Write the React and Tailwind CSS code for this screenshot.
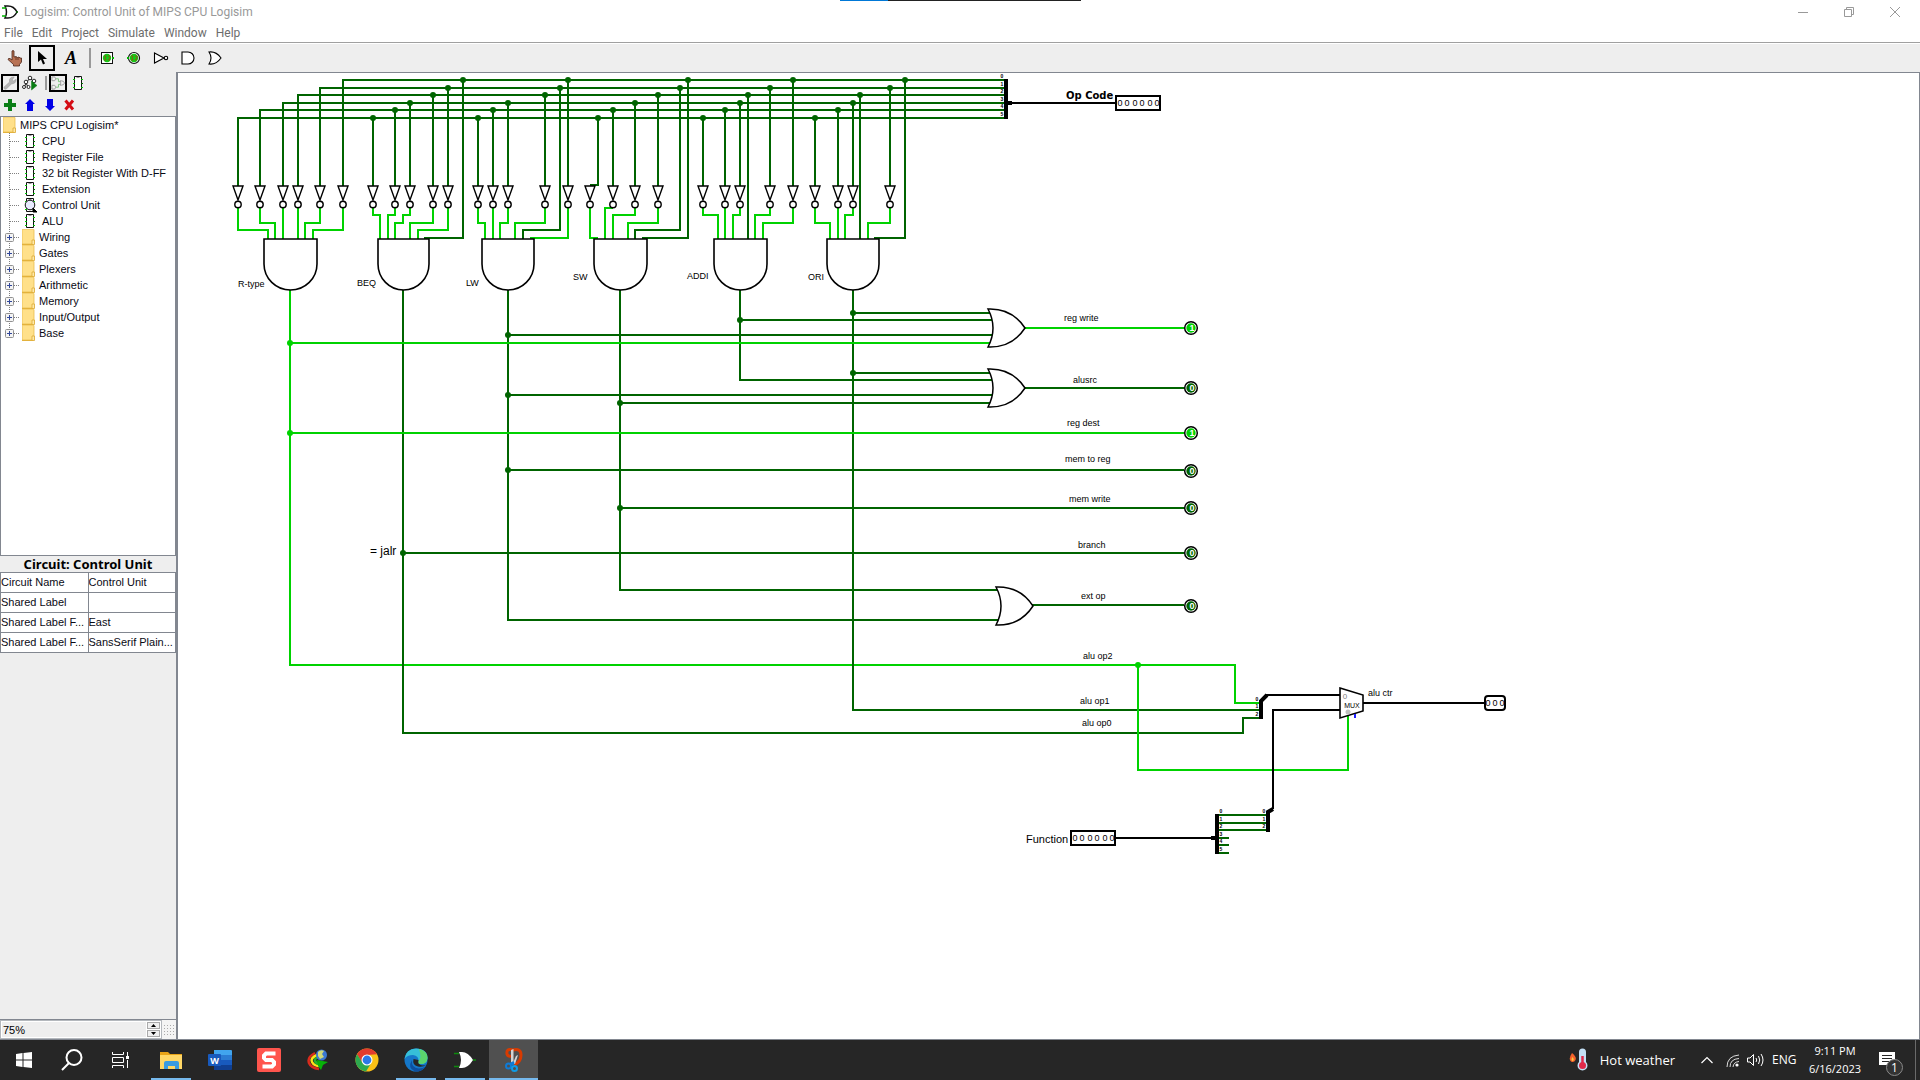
import React from "react";

const DARK = "#006400";
const LIT = "#00d200";

/* ---------- circuit data ---------- */

const busY = [118, 110, 103, 95, 88, 80];

const groups = [
  {
    name: "R-type", labelX: 238, labelY: 287, left: 264, right: 317, cx: 290,
    taps: [238, 260, 283, 298, 320, 343], first: true,
    inverters: [238, 260, 283, 298, 320, 343],
    dark: [],
    lit: ["M238 208V230H268V240", "M260 208V223H275V240", "M283 208V240", "M298 208V240", "M320 208V223H305V240", "M343 208V230H313V240"],
  },
  {
    name: "BEQ", labelX: 357, labelY: 286, left: 378, right: 429, cx: 403,
    taps: [373, 395, 410, 433, 448, 463],
    inverters: [373, 395, 410, 433, 448],
    dark: ["M463 80V238H424"],
    lit: ["M373 208V215H380V240", "M395 208V215H388V240", "M410 208V215H403V223H395V240", "M433 208V223H410V240", "M448 208V230H418V240"],
  },
  {
    name: "LW", labelX: 466, labelY: 286, left: 482, right: 534, cx: 508,
    taps: [478, 493, 508, 545, 560, 568],
    inverters: [478, 493, 508, 545, 568],
    dark: ["M560 88V230H523V240"],
    lit: ["M478 208V223H485V240", "M493 208V240", "M508 208V223H500V240", "M545 208V223H515V240", "M568 208V238H530"],
  },
  {
    name: "SW", labelX: 573, labelY: 280, left: 594, right: 647, cx: 620,
    taps: [598, 613, 635, 658, 680, 688],
    inverters: [590, 613, 635, 658],
    dark: ["M598 118V185H590", "M680 88V230H635V240", "M688 80V238H642"],
    lit: ["M590 208V238H598", "M613 208H605V240", "M635 208V215H613V240", "M658 208V223H628V240"],
  },
  {
    name: "ADDI", labelX: 687, labelY: 279, left: 714, right: 767, cx: 740,
    taps: [703, 725, 740, 748, 770, 793],
    inverters: [703, 725, 740, 770, 793],
    dark: ["M748 95V240"],
    lit: ["M703 208V215H718V240", "M725 208V240", "M740 208V215H733V240", "M770 208V215H755V240", "M793 208V223H763V240"],
  },
  {
    name: "ORI", labelX: 808, labelY: 280, left: 827, right: 879, cx: 853,
    taps: [815, 838, 853, 860, 890, 905],
    inverters: [815, 838, 853, 890],
    dark: ["M860 95V240", "M905 80V238H874"],
    lit: ["M815 208V223H830V240", "M838 208V240", "M853 208V215H845V240", "M890 208V223H868V240"],
  },
];

const darkWires = [
  "M403 290V733H1243V718H1260",
  "M508 290V620H998",
  "M620 290V590H998",
  "M740 290V380H992",
  "M853 290V710H1260",
  "M853 313H990", "M740 320H992", "M508 335H992",
  "M853 373H990", "M508 395H992", "M620 403H990",
  "M1025 388H1184",
  "M508 470H1184", "M620 508H1184", "M403 553H1184",
  "M1032 605H1184",
  "M1219 815H1266", "M1219 823H1266", "M1219 830H1266",
  "M1219 838H1229", "M1219 845H1229", "M1219 853H1229",
];

const litWires = [
  "M290 290V665H1235V703H1260",
  "M290 343H990", "M1025 328H1184", "M290 433H1184",
  "M1138 665V770H1348V714",
];

const darkDots = [
  [740, 320], [508, 335], [853, 313], [853, 373], [508, 395], [620, 403],
  [508, 470], [620, 508], [403, 553],
];
const litDots = [[290, 343], [290, 433], [1138, 665]];

const labels = [
  ["reg write", 1064, 321], ["alusrc", 1073, 383], ["reg dest", 1067, 426],
  ["mem to reg", 1065, 462], ["mem write", 1069, 502], ["branch", 1078, 548],
  ["ext op", 1081, 599], ["alu op2", 1083, 659], ["alu op1", 1080, 704],
  ["alu op0", 1082, 726], ["alu ctr", 1368, 696],
];

const outputs = [
  [328, 1], [388, 0], [433, 1], [471, 0], [508, 0], [553, 0], [606, 0],
];

function Inverter({ x }) {
  return (
    <g fill="#fff" stroke="#000" strokeWidth="1.4">
      <path d={`M${x - 5} 186H${x + 5}L${x} 200Z`} />
      <circle cx={x} cy="204.5" r="3.2" />
    </g>
  );
}

function AndGate({ left, right }) {
  const r = (right - left) / 2;
  return (
    <path
      d={`M${left} 239H${right}V264A${r} 26 0 0 1 ${left} 264Z`}
      fill="#fff" stroke="#000" strokeWidth="1.6"
    />
  );
}

function OrGate({ x, y }) {
  return (
    <path
      d={`M${x} ${y - 19}Q${x + 10} ${y} ${x} ${y + 19}Q${x + 24} ${y + 20} ${x + 37} ${y}Q${x + 24} ${y - 20} ${x} ${y - 19}Z`}
      fill="#fff" stroke="#000" strokeWidth="1.5"
    />
  );
}

function Dot({ x, y, color }) {
  return <circle cx={x} cy={y} r="3" fill={color} />;
}

function Bits({ xs, y }) {
  return xs.map((x) => (
    <text key={x} x={x} y={y} fontSize="9" textAnchor="middle">0</text>
  ));
}

function Ticks({ x, ys }) {
  return ys.map((y, i) => (
    <text key={y} x={x} y={y} fontSize="5" fontWeight="bold" textAnchor="middle">{i}</text>
  ));
}

function Circuit() {
  return (
    <svg width="1400" height="860" viewBox="178 73 1400 860" className="block shrink-0" fontFamily="'Liberation Sans', Arial, sans-serif" role="img" aria-label="Control Unit circuit">
      <g fill="none" stroke={DARK} strokeWidth="2">
        {busY.map((y, i) => (
          <path key={y} d={`M${groups[0].taps[i]} 186V${y}H1004`} />
        ))}
        {groups.slice(1).map((g) =>
          g.taps.map((x, i) =>
            g.inverters.includes(x) ? <path key={x} d={`M${x} ${busY[i]}V186`} /> : null
          )
        )}
        {groups.map((g) => g.dark.map((d) => <path key={d} d={d} />))}
      </g>
      <g fill="none" stroke={LIT} strokeWidth="2">
        {groups.map((g) => g.lit.map((d) => <path key={d} d={d} />))}
        {litWires.map((d) => <path key={d} d={d} />)}
      </g>
      <g fill="none" stroke={DARK} strokeWidth="2">
        {darkWires.map((d) => <path key={d} d={d} />)}
      </g>
      <path d="M1138 665V770M290 343H990M290 433H1184" fill="none" stroke={LIT} strokeWidth="2" />
      {groups.slice(1).map((g) => g.taps.map((x, i) => <Dot key={x} x={x} y={busY[i]} color={DARK} />))}
      {darkDots.map(([x, y]) => <Dot key={`${x}-${y}`} x={x} y={y} color={DARK} />)}
      {litDots.map(([x, y]) => <Dot key={`${x}-${y}`} x={x} y={y} color={LIT} />)}

      {groups.map((g) => (
        <g key={g.name}>
          {g.inverters.map((x) => <Inverter key={x} x={x} />)}
          <AndGate left={g.left} right={g.right} />
          <text x={g.labelX} y={g.labelY} fontSize="9">{g.name}</text>
        </g>
      ))}
      <OrGate x={988} y={328} />
      <OrGate x={988} y={388} />
      <OrGate x={996} y={606} />

      <g fill="none" stroke="#000" strokeWidth="2">
        <path d="M1008 103H1116M1115 838H1216M1266 695H1340M1340 710H1273V809M1363 703H1484" />
        <path d="M1006 79V119M1217 814V854" strokeWidth="4" />
        <path d="M1008 103H1012M1211 838H1216" strokeWidth="4" />
        <path d="M1261 719V701L1267 695M1268 832V812L1273 809" strokeWidth="4" />
        <rect x="1116" y="96" width="44" height="14" fill="#fff" />
        <rect x="1071" y="831" width="44" height="14" fill="#fff" />
        <rect x="1485" y="696" width="20" height="14" rx="3" fill="#fff" />
        <path d="M1340 688L1363 695V711L1340 718Z" fill="#fff" strokeWidth="1.6" />
      </g>
      <circle cx="1348" cy="712" r="2.5" fill="#bfbfbf" />
      <path d="M1355 714V718" stroke="#2020ff" strokeWidth="2" />
      <text x="1345" y="699" fontSize="8" fill="#808080" textAnchor="middle">0</text>
      <text x="1352" y="708" fontSize="7" textAnchor="middle">MUX</text>

      <Bits xs={[1120, 1127, 1135, 1142, 1150, 1157]} y={106} />
      <Bits xs={[1075, 1082, 1090, 1097, 1105, 1112]} y={841} />
      <Bits xs={[1488, 1495, 1502]} y={706} />
      <Ticks x={1002} ys={[78, 86, 93, 101, 108, 116]} />
      <Ticks x={1221} ys={[813, 821, 828, 836, 843, 851]} />
      <Ticks x={1257} ys={[701, 708, 716]} />
      <Ticks x={1264} ys={[813, 821, 828]} />

      {outputs.map(([y, v]) => (
        <g key={y}>
          <circle cx="1191" cy={y} r="6.3" fill="#fff" stroke="#000" strokeWidth="1.5" />
          <circle cx="1191" cy={y} r="4.7" fill={v ? LIT : DARK} />
          <text x="1192" y={y + 3} fontSize="9" fontWeight="bold" fill="#fff" textAnchor="middle">{v}</text>
        </g>
      ))}
      {labels.map(([t, x, y]) => <text key={t} x={x} y={y} fontSize="9">{t}</text>)}
      <text x="1026" y="843" fontSize="11">Function</text>
      <text x="370" y="555" fontSize="12">= jalr</text>
      <text x="1066" y="99" fontSize="10" fontWeight="bold" fontFamily="'DejaVu Sans', Verdana, sans-serif">Op Code</text>
    </svg>
  );
}

/* ---------- small icons ---------- */

function LogoIcon() {
  return (
    <svg width="16" height="16" viewBox="0 0 16 16" fill="none">
      <path d="M3 2H6Q12 2 15 8Q12 14 6 14H3Q6 8 3 2Z" fill="#fff" stroke="#111" strokeWidth="1.5" />
      <path d="M0 4H4M0 12H4" stroke="#00b400" strokeWidth="1.6" />
      <path d="M14 8H16" stroke="#006400" strokeWidth="1.6" />
    </svg>
  );
}

function HandIcon() {
  return (
    <svg width="16" height="17" viewBox="0 0 16 17">
      <path d="M5 1Q6 0 7 1V7L9 6.500L10.500 7.500L12 7L13 8L14.500 8V12L12.500 14.500V16H6.500V14.500L1 9.500Q1 8 3 8.500L5 10Z" fill="#b87254" stroke="#4a2316" strokeWidth="0.800" />
      <path d="M9 7V10M11 7.500V10" stroke="#4a2316" strokeWidth="0.700" />
    </svg>
  );
}

function ChipIcon({ active }) {
  return (
    <svg width="14" height="16" viewBox="0 0 14 16" className="shrink-0">
      <path d="M3.500 1.500H10.500V14.500H3.500Z" fill="#fff" stroke="#111" />
      <path d="M5.500 2.500H8.500" fill="none" stroke="#999" />
      <path d="M2 4.500H4M2 8.500H4M2 12.500H4M10 4.500H12M10 12.500H12" stroke="#00c800" />
      <path d="M10 8.500H12" stroke="#006400" />
      {active && (
        <>
          <circle cx="7" cy="8" r="4.800" fill="#e8eaff" stroke="#111" />
          <path d="M10 11L14 15H10Z" fill="#000" stroke="#000" />
        </>
      )}
    </svg>
  );
}

function FolderIcon() {
  return (
    <svg width="13" height="16" viewBox="0 0 13 16" className="shrink-0">
      <path d="M0 1Q0 0 1 0H11Q12 0 12 1V15H0Z" fill="#ffe08a" stroke="#e9bd4e" strokeWidth="0.800" />
      <path d="M10 11H12.500V15.500H10Z" fill="#ffe9a8" stroke="#dca935" strokeWidth="0.800" />
      <path d="M0 15.500H11" stroke="#e3b23c" />
    </svg>
  );
}

function Branch({ expandable, last }) {
  return (
    <svg width="16" height="16" viewBox="0 0 16 16" className="shrink-0">
      <path d={last ? "M5.500 0V8" : "M5.500 0V16"} stroke="#808080" strokeDasharray="1 1" />
      <path d="M6 8.500H16" stroke="#808080" strokeDasharray="1 1" />
      {expandable && (
        <>
          <rect x="1.500" y="4.500" width="8" height="8" rx="1" fill="#f4f4f4" stroke="#919191" />
          <path d="M3 8.500H8M5.500 6V11" stroke="#31479a" />
        </>
      )}
    </svg>
  );
}

function GateTool({ kind }) {
  return (
    <svg width="16" height="16" viewBox="0 0 16 16" fill="#fff" stroke="#000" strokeWidth="1.100">
      {kind === "not" && (
        <>
          <path d="M1.500 3L11 8L1.500 13Z" />
          <circle cx="13" cy="8" r="1.700" />
        </>
      )}
      {kind === "and" && <path d="M2 2H8A6 6 0 0 1 8 14H2Z" />}
      {kind === "or" && <path d="M2 2Q9 1 14 8Q9 15 2 14Q6 8 2 2Z" />}
    </svg>
  );
}

function PinTool({ round }) {
  return (
    <svg width="16" height="16" viewBox="0 0 16 16">
      {round ? (
        <circle cx="8" cy="8" r="5.500" fill="#fff" stroke="#111" strokeWidth="1.200" />
      ) : (
        <rect x="2.500" y="2.500" width="11" height="11" fill="#fff" stroke="#111" />
      )}
      <circle cx="8" cy="8" r="4.200" fill="#14c814" />
      <path d="M5 6H7L6 8L7 10H5M9 6H11V8L9 10H11" fill="none" stroke="#8a5a10" strokeWidth="0.900" />
      <path d={round ? "M1 8H3" : "M13 8H15"} stroke="#00b400" strokeWidth="2" />
    </svg>
  );
}

function WrenchIcon() {
  return (
    <svg width="14" height="14" viewBox="0 0 15 15">
      <path d="M1 12L7 6.500Q6 3 9 1.500L12 1L10 4L11 5.500L14 3.500Q14.500 8 9 8.500L3.500 14Q1 15 1 12Z" fill="#b4b4b4" stroke="#9a9a9a" strokeWidth="0.600" />
    </svg>
  );
}

function SimTreeIcon() {
  return (
    <svg width="16" height="16" viewBox="0 0 16 16" fill="#fff" stroke="#111" strokeWidth="0.900">
      <path d="M8 3L4 8L2 13M4 8L6 12M8 3L12 7" fill="none" />
      <circle cx="8" cy="3" r="1.800" />
      <circle cx="4" cy="7" r="1.800" />
      <circle cx="2" cy="12" r="1.500" />
      <circle cx="6.500" cy="12" r="1.500" />
      <circle cx="12" cy="6" r="1.800" />
      <path d="M9.500 6V15L15 10.500Z" fill="#0a7d14" stroke="#0a7d14" strokeWidth="0.500" />
    </svg>
  );
}

function LayoutIcon() {
  return (
    <svg width="14" height="14" viewBox="0 0 15 15" fill="#f2f2f2" stroke="#9a9a9a">
      <path d="M5 3H8V6H10M5 12H8V9H10" fill="none" stroke="#7ac47a" />
      <path d="M1 1H4Q6 3 4 5H1ZM1 10H4Q6 12 4 14H1ZM10 5Q14 5 14.500 7.500Q14 10 10 10Q11 7.500 10 5Z" />
    </svg>
  );
}

/* ---------- window parts ---------- */

const circuits = ["CPU", "Register File", "32 bit Register With D-FF", "Extension", "Control Unit", "ALU"];
const libraries = ["Wiring", "Gates", "Plexers", "Arithmetic", "Memory", "Input/Output", "Base"];
const attributes = [
  ["Circuit Name", "Control Unit"],
  ["Shared Label", ""],
  ["Shared Label F...", "East"],
  ["Shared Label F...", "SansSerif Plain..."],
];

function TitleBar() {
  return (
    <header className="flex h-6 shrink-0 items-center bg-white text-[#999]">
      <div className="flex flex-1 items-center gap-[6px] pl-[2px]">
        <LogoIcon />
        <h1 className="text-xs leading-6">Logisim: Control Unit of MIPS CPU Logisim</h1>
      </div>
      <div className="flex h-5 items-center pr-[2px]">
        <button aria-label="Minimize" className="flex w-[46px] justify-center">
          <svg width="10" height="10" stroke="#999"><path d="M0 5.500H10" /></svg>
        </button>
        <button aria-label="Restore" className="flex w-[46px] justify-center">
          <svg width="10" height="10" fill="none" stroke="#999"><path d="M0.500 2.500H7.500V9.500H0.500ZM2.500 2V0.500H9.500V7.500H8" /></svg>
        </button>
        <button aria-label="Close" className="flex w-[46px] justify-center">
          <svg width="10" height="10" stroke="#999"><path d="M0 0L10 10M10 0L0 10" /></svg>
        </button>
      </div>
    </header>
  );
}

function MenuBar() {
  return (
    <nav className="flex h-[19px] shrink-0 items-center gap-[9px] border-b border-[#a0a0a0] bg-white pl-1 text-xs leading-4 text-[#6d6d6d]">
      {["File", "Edit", "Project", "Simulate", "Window", "Help"].map((m) => (
        <button key={m}>{m}</button>
      ))}
    </nav>
  );
}

function Toolbar() {
  return (
    <div className="flex h-[29px] shrink-0 items-center border-t border-white bg-[#eee] pl-[7px]">
      <button aria-label="Poke tool" className="flex w-[22px]"><HandIcon /></button>
      <button aria-label="Edit tool" className="flex size-[26px] items-center justify-center border-2 border-black">
        <svg width="12" height="16" viewBox="0 0 12 16"><path d="M2 1V12L5 9.500L7 14.500L9 13.500L7 9H11Z" fill="#000" /></svg>
      </button>
      <button aria-label="Text tool" className="flex w-8 justify-center font-['Liberation_Serif',serif] text-lg leading-6 font-bold italic">A</button>
      <span className="ml-[2px] h-5 w-[2px] bg-[#999]" />
      <div className="ml-2 flex gap-[11px]">
        <button aria-label="Input pin"><PinTool /></button>
        <button aria-label="Output pin"><PinTool round /></button>
        <button aria-label="NOT gate"><GateTool kind="not" /></button>
        <button aria-label="AND gate"><GateTool kind="and" /></button>
        <button aria-label="OR gate"><GateTool kind="or" /></button>
      </div>
    </div>
  );
}

function SideTools() {
  return (
    <div className="h-[44px] shrink-0">
      <div className="flex h-[22px] items-center pl-px">
        <button aria-label="Toolbox" className="flex size-[18px] shrink-0 items-center justify-center border-2 border-black"><WrenchIcon /></button>
        <button aria-label="Simulation tree" className="ml-[3px]"><SimTreeIcon /></button>
        <span className="ml-[7px] h-[14px] w-[2px] bg-[#999]" />
        <button aria-label="Edit layout" className="ml-[2px] flex size-[18px] shrink-0 items-center justify-center border-2 border-black"><LayoutIcon /></button>
        <button aria-label="Edit appearance" className="ml-1"><ChipIcon /></button>
      </div>
      <div className="flex h-[22px] items-center gap-2 pl-1">
        <button aria-label="Add circuit"><svg width="12" height="12"><path d="M4 0H8V4H12V8H8V12H4V8H0V4H4Z" fill="#0b7f17" /></svg></button>
        <button aria-label="Move up"><svg width="12" height="12"><path d="M6 0L11 5H9V12H3V5H1Z" fill="#0000e6" /></svg></button>
        <button aria-label="Move down"><svg width="12" height="12"><path d="M6 12L11 7H9V0H3V7H1Z" fill="#0000e6" /></svg></button>
        <button aria-label="Delete"><svg width="11" height="12"><path d="M1.500 1.500L9 10.500M9 1.500L1.500 10.500" stroke="#d40c14" strokeWidth="3" /></svg></button>
      </div>
    </div>
  );
}

function Explorer() {
  return (
    <ul className="h-[440px] shrink-0 overflow-hidden border border-[#828790] bg-white text-[11px] leading-4 text-[#0a0a14]">
      <li className="flex h-4 items-center">
        <button className="ml-[2px] flex items-center gap-1"><FolderIcon />MIPS CPU Logisim*</button>
      </li>
      {circuits.map((c) => (
        <li key={c} className="flex h-4 items-center pl-[3px]">
          <Branch />
          <button className="ml-[3px] flex items-center gap-[5px] whitespace-nowrap"><ChipIcon active={c === "Control Unit"} />{c}</button>
        </li>
      ))}
      {libraries.map((l, i) => (
        <li key={l} className="flex h-4 items-center pl-[3px]">
          <Branch expandable last={i === libraries.length - 1} />
          <button className="ml-[2px] flex items-center gap-1"><FolderIcon />{l}</button>
        </li>
      ))}
    </ul>
  );
}

function Attributes() {
  return (
    <section className="text-[11px] leading-4 text-[#0a0a14]">
      <h2 className="h-4 text-center font-['Noto_Sans',sans-serif] text-[13px] leading-4 font-bold whitespace-nowrap text-black">Circuit: Control Unit</h2>
      <table className="w-full table-fixed border-collapse bg-white">
        <tbody>
          {attributes.map(([k, v], i) => (
            <tr key={i} className="h-5">
              <th scope="row" className="overflow-hidden border border-[#828790] p-0 pb-[2px] text-left font-normal whitespace-nowrap">{k}</th>
              <td className="overflow-hidden border border-[#828790] p-0 pb-[2px] whitespace-nowrap">{v}</td>
            </tr>
          ))}
        </tbody>
      </table>
    </section>
  );
}

function ZoomBar() {
  return (
    <div className="mt-auto flex h-[21px] shrink-0 border-y border-[#828790]">
      <div className="flex flex-1 border border-[#b4b8bd] bg-white p-px">
        <input aria-label="Zoom" defaultValue="75%" className="w-0 flex-1 bg-[#eee] pl-px text-[11px] leading-4 outline-none" />
        <div className="ml-px flex w-[13px] flex-col gap-px">
          <button aria-label="Zoom in" className="flex flex-1 items-center justify-center border border-[#aaa] bg-[#f0f0f0]"><svg width="5" height="3"><path d="M0 3L2.500 0L5 3Z" /></svg></button>
          <button aria-label="Zoom out" className="flex flex-1 items-center justify-center border border-[#aaa] bg-[#f0f0f0]"><svg width="5" height="3"><path d="M0 0L2.500 3L5 0Z" /></svg></button>
        </div>
      </div>
      <button aria-label="Toggle grid" className="flex w-[14px] items-center justify-center bg-[#f4f4f4]">
        <svg width="10" height="12" stroke="#aaa" strokeDasharray="1 2"><path d="M0 1.500H10M0 4.500H10M0 7.500H10M0 10.500H10" /></svg>
      </button>
    </div>
  );
}

/* ---------- taskbar ---------- */

const TaskIcons = {
  explorer: (
    <svg width="22" height="19" viewBox="0 0 22 19">
      <path d="M0 1H8L10 3H22V17H0Z" fill="#e8a317" />
      <path d="M0 4H22V18H0Z" fill="#ffd766" />
      <path d="M4 18V12Q4 10 6 10H17Q19 10 19 12V18H15V15H8V18Z" fill="#3a9be0" />
    </svg>
  ),
  word: (
    <svg width="24" height="22" viewBox="0 0 24 22">
      <path d="M6 1H23Q24 1 24 2V6H6Z" fill="#41a5ee" />
      <path d="M6 6H24V11H6Z" fill="#2b7cd3" />
      <path d="M6 11H24V16H6Z" fill="#185abd" />
      <path d="M6 16H24V20Q24 21 23 21H6Z" fill="#103f91" />
      <rect x="0" y="5" width="13" height="12" rx="1" fill="#185abd" />
      <text x="6.500" y="14.500" fontSize="9" fontWeight="bold" fill="#fff" textAnchor="middle">W</text>
    </svg>
  ),
  snagit: (
    <svg width="24" height="24" viewBox="0 0 24 24">
      <rect x="0" y="0" width="24" height="24" rx="2" fill="#ff554d" />
      <path d="M18.500 5.500H9L7 7.500V10L9 12H15L17 14V16.500L15 18.500H5.500" fill="none" stroke="#fff" strokeWidth="4" />
    </svg>
  ),
  idm: (
    <svg width="24" height="22" viewBox="0 0 22 22">
      <path d="M8 4Q0 8 2 14Q4 19 12 20" fill="none" stroke="#d92b1c" strokeWidth="2.500" />
      <path d="M10 6Q3 9 5 13Q7 17 13 17" fill="none" stroke="#ffe11a" strokeWidth="2.500" />
      <path d="M11 8Q7 10 8 12Q9 15 13 15" fill="none" stroke="#25b02c" strokeWidth="2.500" />
      <circle cx="14.500" cy="6" r="5.500" fill="#3c78d2" />
      <path d="M11 3Q14 0 17 2L15 5L17 8L13 10L11 7Z" fill="#cfd97a" />
      <path d="M10 11L21 13L16 16L14 21L11 17Z" fill="#08b208" />
    </svg>
  ),
  chrome: (
    <svg width="24" height="24" viewBox="0 0 24 24">
      <circle cx="12" cy="12" r="11.500" fill="#fbc116" />
      <path d="M2 6.300A11.500 11.500 0 0 1 22 6.300L12 7L7 14.700Z" fill="#e33b2e" />
      <path d="M2 6.300A11.500 11.500 0 0 0 11 23.500L16.500 14.500L12 17Q9 17 7.500 14.800Z" fill="#2da94f" />
      <circle cx="12" cy="12" r="5.500" fill="#fff" />
      <circle cx="12" cy="12" r="4.400" fill="#2c78e8" />
    </svg>
  ),
  edge: (
    <svg width="24" height="24" viewBox="0 0 24 24">
      <circle cx="12" cy="12" r="11.500" fill="#1577c9" />
      <path d="M0.500 11Q2 0.500 12 0.500Q23.500 1 23.500 10Q23 16 17 16Q13 16 14.500 13Q15 8 9 7Q3 7 0.500 11Z" fill="#36bfd8" />
      <path d="M15 1Q23.500 3 23.500 10Q23 16 17 16Q13 16 14.500 13Q18 10 15 1Z" fill="#5bd56d" />
      <path d="M8 12Q7 20 15 20.500Q19 20.500 22 18Q18 24 11 23.500Q3 20 8 12Z" fill="#0d4f9e" />
      <path d="M9.500 11Q8 17 14 18.500Q19 19.500 22.500 16.500Q18 19 14.500 15.500Q14 14 14.500 12Z" fill="#262626" />
    </svg>
  ),
  logisim: (
    <svg width="22" height="18" viewBox="0 0 22 18">
      <path d="M5 1H8Q14 1 19 9Q14 17 8 17H5Q9 9 5 1Z" fill="#fff" />
      <path d="M0 2.500H5M0 15.500H5M19 9H22" stroke="#0d8a0d" strokeWidth="1.500" />
    </svg>
  ),
  snip: (
    <svg width="20" height="24" viewBox="0 0 20 24">
      <path d="M9 2Q2 0 3 6Q4 9 8 8M9 2Q17 0 17 7Q17 14 10 17" fill="none" stroke="#d83b01" strokeWidth="3" />
      <path d="M7 2L9.500 1V16H7ZM14 7L11 16H8.500L12 8Z" fill="#d4d4d4" />
      <circle cx="4.500" cy="18" r="2.500" fill="none" stroke="#0f7bd6" strokeWidth="2" />
      <circle cx="10.500" cy="20.500" r="2.500" fill="none" stroke="#0f9be6" strokeWidth="2" />
      <path d="M6 16L10 14M8 17L10 15" stroke="#0f7bd6" strokeWidth="2" />
    </svg>
  ),
};

const tasks = [
  ["explorer", "File Explorer", "open"], ["word", "Word", ""], ["snagit", "Snagit", ""],
  ["idm", "Download Manager", ""], ["chrome", "Chrome", ""], ["edge", "Edge", "open"],
  ["logisim", "Logisim", "open"], ["snip", "Snipping Tool", "active"],
];

function Taskbar() {
  return (
    <footer className="flex h-10 shrink-0 items-stretch bg-[#262626] font-['Open_Sans',sans-serif] text-white">
      <div className="flex">
        <button aria-label="Start" className="flex w-12 items-center justify-center">
          <svg width="16" height="16" viewBox="0 0 16 16" fill="#fff"><path d="M0 2L6.500 1V7.500H0ZM7.500 1L16 0V7.500H7.500ZM0 8.500H6.500V15L0 14ZM7.500 8.500H16V16L7.500 15Z" /></svg>
        </button>
        <button aria-label="Search" className="flex w-12 items-center justify-center">
          <svg width="22" height="22" viewBox="0 0 22 22" fill="none" stroke="#fff" strokeWidth="2"><circle cx="13" cy="8.500" r="7.500" /><path d="M8 14L1 21" /></svg>
        </button>
        <button aria-label="Task view" className="flex w-12 items-center justify-center">
          <svg width="17" height="16" viewBox="0 0 17 16" fill="none" stroke="#fff"><path d="M0.500 0V2.500H11.500V0M0.500 5.500H11.500V10.500H0.500ZM0.500 16V13.500H11.500V16M15.500 0V4M15.500 8V16" /><path d="M14 4H17V7H14Z" fill="#fff" stroke="none" /></svg>
        </button>
      </div>
      <div className="ml-[2px] grid w-[392px] grid-cols-8">
        {tasks.map(([id, name, state]) => (
          <button
            key={id}
            aria-label={name}
            className={`flex flex-col items-center ${state === "active" ? "bg-[#505050]" : ""}`}
          >
            <span className="flex h-[38px] items-center pt-[2px]">{TaskIcons[id]}</span>
            {state === "open" && <span className="h-[2px] w-10 bg-[#76b9ed]" />}
            {state === "active" && <span className="h-[2px] w-full bg-[#76b9ed]" />}
          </button>
        ))}
      </div>

      <div className="ml-auto flex items-center">
        <button className="mr-[26px] flex items-center gap-3 text-[13px] leading-5 whitespace-nowrap">
          <svg width="19" height="24" viewBox="0 0 19 24">
            <path d="M3 5Q8 9 6.500 12Q5 15 2 13.500Q-1 11 3 5Z" fill="#f4622c" />
            <path d="M3.500 9Q6 12 3.500 13Q1.500 12 3.500 9Z" fill="#ffc83d" />
            <path d="M10 4A3.500 3.500 0 0 1 17 4V14A5 5 0 1 1 10 14Z" fill="#c3dff5" />
            <circle cx="13.500" cy="17.500" r="3.500" fill="#e0294a" />
            <path d="M13.500 8V17" stroke="#e0294a" strokeWidth="2.500" />
          </svg>
          Hot weather
        </button>
        <button aria-label="Show hidden icons" className="mr-[13px]">
          <svg width="12" height="8" fill="none" stroke="#fff" strokeWidth="1.200"><path d="M0.500 7L6 1.500L11.500 7" /></svg>
        </button>
        <button aria-label="Network" className="mr-2">
          <svg width="13" height="13" viewBox="0 0 13 13" fill="none" stroke="#ddd"><path d="M1 13Q1 2 13 1M4 13Q4 5 13 4.500M7 13Q7.500 8 13 7.500" /><circle cx="11" cy="11" r="1.600" fill="#fff" stroke="none" /></svg>
        </button>
        <button aria-label="Volume" className="mr-2">
          <svg width="17" height="14" viewBox="0 0 17 14" fill="none" stroke="#fff"><path d="M0.500 5H3L6.500 1.500V12.500L3 9H0.500ZM9 5Q10.500 7 9 9M11.500 3Q14 7 11.500 11M14 1Q18 7 14 13" /></svg>
        </button>
        <button className="w-6 text-center text-xs leading-4">ENG</button>
        <button className="ml-3 w-[54px] text-center text-[11px] leading-[18px] whitespace-nowrap">
          <span className="block">9:11 PM</span>
          <span className="block">6/16/2023</span>
        </button>
        <button aria-label="Notifications" className="mr-[11px] ml-[17px] flex pt-2">
          <svg width="25" height="26" viewBox="0 0 25 26">
            <path d="M0 1H16V14H12L9 17V14H0Z" fill="#fff" />
            <path d="M3 4.500H13M3 7.500H13M3 10.500H10" stroke="#262626" />
            <circle cx="15.500" cy="16.500" r="8" fill="#333" stroke="#8a8a8a" />
            <text x="15.500" y="21" fontSize="12" fill="#fff" textAnchor="middle">1</text>
          </svg>
        </button>
        <button aria-label="Show desktop" className="h-10 w-[5px] border-l border-[#6a6a6a]" />
      </div>
    </footer>
  );
}

export default function App() {
  return (
    <div className="relative flex h-screen flex-col overflow-hidden bg-white font-[Roboto,sans-serif]">
      <div className="absolute inset-x-0 top-0 flex h-px justify-center">
        <span className="h-px w-12 bg-[#0078d7]" />
        <span className="h-px w-[193px] bg-[#222]" />
      </div>
      <TitleBar />
      <MenuBar />
      <Toolbar />
      <main className="flex min-h-0 flex-1 bg-[#eee]">
        <aside className="flex w-[177px] shrink-0 flex-col border-r border-[#828790] font-['Liberation_Sans',Arial,sans-serif]">
          <SideTools />
          <Explorer />
          <Attributes />
          <ZoomBar />
        </aside>
        <section className="min-w-0 flex-1 overflow-hidden border border-[#828790] bg-white">
          <Circuit />
        </section>
      </main>
      <Taskbar />
    </div>
  );
}
